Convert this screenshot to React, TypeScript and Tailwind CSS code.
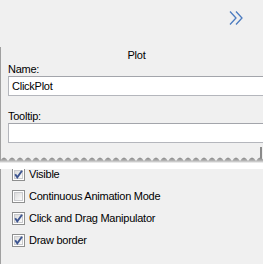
import { FC } from "react"

const font = { fontFamily: '"Liberation Sans", Arial, sans-serif' }

const Chevrons: FC = () => (
  <svg width="14" height="14" viewBox="0 0 14 14" fill="none">
    <path d="M1 0.5 L7 7 L1 13.5" stroke="#4b7bbf" strokeWidth="1.3" />
    <path d="M7 0.5 L13 7 L7 13.5" stroke="#4b7bbf" strokeWidth="1.3" />
  </svg>
)

const TornEdge: FC = () => {
  let d = "M0 18 L0 10"
  for (let x = 0; x < 272; x += 8) {
    d += ` Q${x + 4} 3 ${x + 8} 10`
  }
  d += " L272 18 Z"
  return (
    <svg width="272" height="18" viewBox="0 0 272 18" className="block">
      <defs>
        <linearGradient id="tear" x1="0" y1="0" x2="0" y2="18" gradientUnits="userSpaceOnUse">
          <stop offset="0.33" stopColor="#7a7a7a" />
          <stop offset="0.55" stopColor="#b8b8b8" />
          <stop offset="0.68" stopColor="#ffffff" />
          <stop offset="1" stopColor="#ffffff" />
        </linearGradient>
      </defs>
      <path d={d} fill="url(#tear)" />
    </svg>
  )
}

const Check: FC<{ checked: boolean }> = ({ checked }) => (
  <div className="relative w-[13px] h-[13px] border border-[#8e8f8f] bg-white p-[1px] shrink-0">
    <div className="w-full h-full border border-[#c9cacd] bg-gradient-to-br from-[#dcdcdc] to-[#fbfbfb]" />
    {checked && (
      <svg
        width="13"
        height="13"
        viewBox="0 0 13 13"
        className="absolute -left-px -top-px"
      >
        <path d="M3.2 6.2 L5.3 9.3 L10 2.8" stroke="#3d5590" strokeWidth="1.9" fill="none" />
      </svg>
    )}
  </div>
)

const options = [
  { label: "Visible", checked: true },
  { label: "Continuous Animation Mode", checked: false },
  { label: "Click and Drag Manipulator", checked: true },
  { label: "Draw border", checked: true },
]

export default function App() {
  return (
    <div
      className="w-[263px] h-[264px] bg-[#f0f0f0] overflow-hidden text-[11px] tracking-[-0.25px] text-black leading-[13px]"
      style={font}
    >
      <div className="h-[47px] flex justify-end items-start pt-[11px] pr-[20px]">
        <Chevrons />
      </div>
      <div className="relative w-[272px] h-[217px] border-l border-[#a0a0a0] pt-[2px]">
        <div className="text-center">Plot</div>
        <div className="pl-[7px] mt-[1px]">
          <div>Name:</div>
          <div className="h-[20px] border border-[#b4b6bc] border-t-[#a3a5ab] bg-white pl-[3px] flex items-center">
            ClickPlot
          </div>
          <div className="mt-[14px]">Tooltip:</div>
          <div className="h-[20px] border border-[#b4b6bc] border-t-[#a3a5ab] bg-white" />
        </div>
        <div className="absolute right-[10px] top-[100px] w-[2px] h-[14px] bg-[#8a8a8a]" />
        <div className="relative z-10 mt-[8px] -ml-px">
          <TornEdge />
        </div>
        <div className="-mt-[6px] pl-[11px] flex flex-col">
          {options.map((o) => (
            <div key={o.label} className="h-[22px] flex items-center gap-[4px]">
              <Check checked={o.checked} />
              <span>{o.label}</span>
            </div>
          ))}
        </div>
      </div>
    </div>
  )
}
